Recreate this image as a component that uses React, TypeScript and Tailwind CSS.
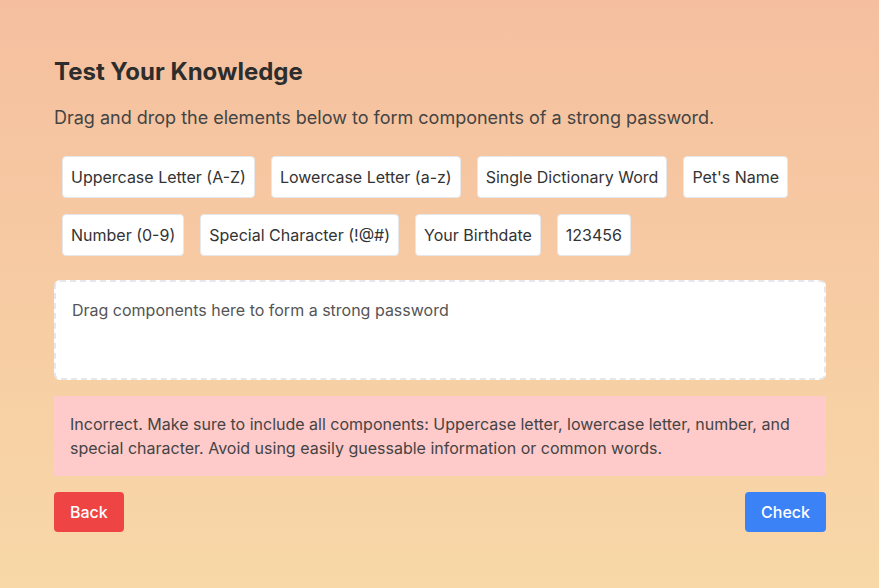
const chips = [
  "Uppercase Letter (A-Z)",
  "Lowercase Letter (a-z)",
  "Single Dictionary Word",
  "Pet's Name",
  "Number (0-9)",
  "Special Character (!@#)",
  "Your Birthdate",
  "123456",
];

export default function App() {
  return (
    <div
      className="min-h-[588px] w-full bg-gradient-to-b from-[#f5bf9f] to-[#f8d8a7] pl-[54px] pr-[53px] pt-14 text-[#333]"
      style={{ fontFamily: "Inter, 'Noto Sans', sans-serif" }}
    >
      <h2 className="mb-4 text-2xl font-bold leading-8 text-[#2d2d2d]">Test Your Knowledge</h2>
      <p className="mb-4 text-lg leading-7 text-[#444]">
        Drag and drop the elements below to form components of a strong password.
      </p>

      <div className="mb-4 flex flex-wrap">
        {chips.map((c) => (
          <div
            key={c}
            className="m-2 cursor-move rounded border border-gray-200 bg-white px-2 py-2 text-base leading-6 text-[#333]"
          >
            {c}
          </div>
        ))}
      </div>

      <div className="min-h-[100px] rounded-md border-2 border-dashed border-gray-200 bg-white p-4 text-base leading-6 text-[#555]">
        Drag components here to form a strong password
      </div>

      <div className="mt-4 bg-[#fecaca] p-4 text-base leading-6 text-[#444]">
        Incorrect. Make sure to include all components: Uppercase letter, lowercase letter, number, and
        special character. Avoid using easily guessable information or common words.
      </div>

      <div className="mt-4 flex justify-between">
        <button className="rounded bg-[#ef4444] px-4 py-2 text-base font-medium leading-6 text-white">
          Back
        </button>
        <button className="rounded bg-[#3b82f6] px-4 py-2 text-base font-medium leading-6 text-white">
          Check
        </button>
      </div>
    </div>
  );
}
